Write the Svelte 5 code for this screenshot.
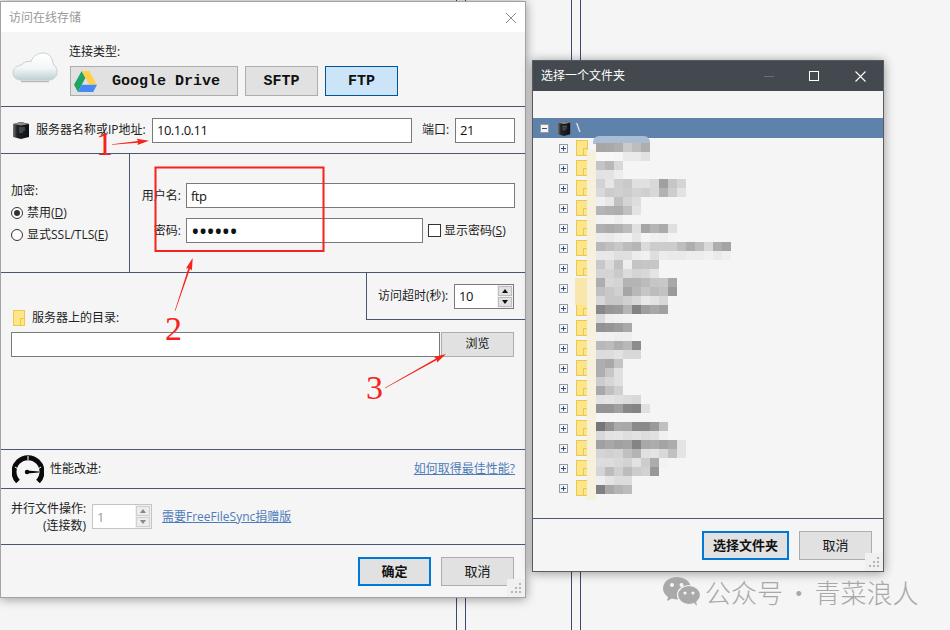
<script>
	const treeRows = Array(18).fill(0)
	// blurred-out folder names, one string per 9px band of the mosaic
	const mosaic = [
		'a6 a8 ae ca bd ae', 'f8 f8 f5 ea ea e1', 'c4 b8 d8', 'e2 e3 ed',
		'd2 e6 cf c9 e0 e0 d8 a0 c6 d5', 'd9 cc d0 cc d4 cf d8 b2 cd e2', 'ef e8 c0 d4 dd', 'b5 b0 ae c0 e3',
		'f2 f3 ee', 'b0 ab b0 bc e0 a6 b5 aa df', 'ec ea ef f2 e6 f4 f0 ee f4',
		'b8 c0 c8 bc b6 da cc cc cc be ae be d8 ae a4', 'e8 e8 df df ec f0 de ec ea e9 ed ec f0 ea ef',
		'c8 dc c2 ee c4 c6 c6', 'd4 d4 ca dc d4 d8 e4', 'ae d8 d4 b4 b4 bc c6 c8 a8', 'c0 c8 d0 a6 b8 c6 bc c2 9a',
		'd8 c8 c8 d0 d8 e8 e2 d8', '88 96 9a b4 82 9e a8 a0', 'da ee f0 f2', '92 96 9c a8', 'f0 f1 ee ee',
		'b8 bc ae b8 8c', 'dc dc e2 d8 d8', 'ae a8 c4', 'ae c6 e0', 'cc d6 e0', 'a8 c0 d0', 'e2 e4 e0 dc d8',
		'94 94 a0 88 84 e0', '', '76 92 aa a8 8a 8a 9a c0', 'd8 e2 e4 de e2 dc e0 f0',
		'a0 a8 a0 a4 84 a8 ac a4 ac e4', 'd4 d0 d4 c0 b4 e0 e4 d8 c0 e4', 'dc dc d8 d2 e2 cc ac f2',
		'd4 bc d0 bc cc d2 98', 'ee e4 dc dc', '80 a8 b4 bc'
	].map((r) => (r ? r.split(' ') : []))

	function arrow(x1, y1, x2, y2) {
		const len = Math.hypot(x2 - x1, y2 - y1)
		const ux = (x2 - x1) / len
		const uy = (y2 - y1) / len
		const nx = -uy
		const ny = ux
		const bx = x2 - ux * 11
		const by = y2 - uy * 11
		const p = (x, y, w) => `${(x + nx * w).toFixed(1)},${(y + ny * w).toFixed(1)}`
		return [p(x1, y1, 0.3), p(bx, by, 0.9), p(bx - ux, by - uy, 3.2), p(x2, y2, 0), p(bx - ux, by - uy, -3.2), p(bx, by, -0.9), p(x1, y1, -0.3)].join(' ')
	}
</script>

{#snippet server()}
	<svg class="server" viewBox="0 0 18 19" preserveAspectRatio="none">
		<defs>
			<linearGradient id="srv" x1="0" x2="1" y1="0" y2="0">
				<stop offset="0" stop-color="#777" />
				<stop offset="0.25" stop-color="#222" />
				<stop offset="1" stop-color="#111" />
			</linearGradient>
		</defs>
		<path d="M1 3 L9 1 L17 3 L17 16 L9 18 L1 16 Z" fill="url(#srv)" />
		<path d="M1 3 L9 1 L17 3 L9 4.5 Z" fill="#8a8a8a" />
		<path d="M7 7 H13 M7 9 H13 M7 11 H11" stroke="#6f8aa8" stroke-width="0.8" />
	</svg>
{/snippet}

{#snippet grip()}
	<svg class="grip" width="18" height="18" viewBox="0 0 18 18">
		<rect width="18" height="18" fill="#f0f0f0" />
		<path d="M12 4h2v2h-2z M8 8h2v2H8z M12 8h2v2h-2z M4 12h2v2H4z M8 12h2v2H8z M12 12h2v2h-2z" fill="#b5b5b5" />
	</svg>
{/snippet}

<div class="screen">
	<i class="vline" style="left:456px"></i>
	<i class="vline" style="left:465px"></i>
	<i class="vline" style="left:571px"></i>
	<i class="vline" style="left:580px"></i>

	<div class="win main">
		<div class="titlebar">
			<span>访问在线存储</span>
			<svg width="12" height="12" viewBox="0 0 12 12"><path d="M1 1 L11 11 M11 1 L1 11" stroke="#8a8a8a" stroke-width="1" /></svg>
		</div>

		<div class="sec type">
			<svg class="cloud" width="46" height="31" viewBox="0 0 46 31">
				<defs>
					<linearGradient id="cl" x1="0" x2="0" y1="0" y2="1">
						<stop offset="0" stop-color="#fff" />
						<stop offset="0.55" stop-color="#f4f7f7" />
						<stop offset="1" stop-color="#bfd0d4" />
					</linearGradient>
				</defs>
				<path d="M9 28 C3 28 1 24 1 21 C1 16 5 14 9 13 C12 10 15 9 19 9.5 C21 4 26 1 31 1 C38 1 41 7 41 12 C44 14 45 17 45 20 C45 25 41 28 37 28 Z" fill="url(#cl)" stroke="#c9cfcf" />
				<path d="M9 29.5 H37" stroke="#b9b9b9" stroke-width="1.5" />
			</svg>
			<div>
				<div class="typelabel">连接类型:</div>
				<div class="typebtns">
					<button class="mono gd">
						<svg width="23" height="21" viewBox="0 0 22 20">
							<path d="M7.3 0 L11 6.5 L3.7 20 L0 13 Z" fill="#1fa463" />
							<path d="M7.3 0 H14.7 L22 13 H14.7 Z" fill="#ffd04b" />
							<path d="M7.3 13 H22 L18.3 20 H3.7 Z" fill="#4688f4" />
						</svg>
						<span>Google Drive</span>
					</button>
					<button class="mono sftp">SFTP</button>
					<button class="mono ftp">FTP</button>
				</div>
			</div>
		</div>

		<div class="sec host">
			{@render server()}
			<label for="host" class="hostlabel">服务器名称或IP地址:</label>
			<input id="host" class="field hostfield" value="10.1.0.11" readonly />
			<label for="port" class="portlabel">端口:</label>
			<input id="port" class="field portfield" value="21" readonly />
		</div>

		<div class="sec cred">
			<div class="enc">
				<div>加密:</div>
				<div class="radio"><i class="dot on"></i>禁用(<u>D</u>)</div>
				<div class="radio"><i class="dot"></i>显式SSL/TLS(<u>E</u>)</div>
			</div>
			<div class="login">
				<div class="loginrow">
					<span class="lab">用户名:</span>
					<input class="field grow" value="ftp" readonly />
				</div>
				<div class="loginrow">
					<span class="lab">密码:</span>
					<input class="field grow pass" type="password" value="123456" readonly />
					<span class="show"><i class="check"></i>显示密码(<u>S</u>)</span>
				</div>
			</div>
		</div>

		<div class="sec dir">
			<div class="dirtop">
				<div class="dirlabel"><i class="folder"></i>服务器上的目录:</div>
				<div class="timeout">
					<span>访问超时(秒):</span>
					<div class="spin">
						<input class="field spinfield" value="10" readonly />
						<div class="spinbtns">
							<b class="up"></b>
							<b class="down"></b>
						</div>
					</div>
				</div>
			</div>
			<div class="pathrow">
				<input class="field grow" readonly />
				<button class="btn browse">浏览</button>
			</div>
		</div>

		<div class="sec perf">
			<svg width="32" height="28" viewBox="0 0 32 28">
				<path d="M6 26.5 A14 14 0 1 1 26 26.5" fill="none" stroke="#0a0a0a" stroke-width="5" />
				<path d="M16 1 V5 M3 12 L6 14 M29 12 L26 14" stroke="#fff" stroke-width="1" />
				<circle cx="15" cy="17" r="2.2" fill="#0a0a0a" />
				<path d="M15 15.6 L27 16.4 L27 17.4 L15 18.4 Z" fill="#0a0a0a" />
			</svg>
			<span class="perflabel">性能改进:</span>
			<a href="#top" class="link right">如何取得最佳性能?</a>
		</div>

		<div class="sec par">
			<div class="parlabel">并行文件操作:<br />(连接数)</div>
			<div class="spin off">
				<input class="field spinfield" value="1" readonly disabled />
				<div class="spinbtns">
					<b class="up"></b>
					<b class="down"></b>
				</div>
			</div>
			<a href="#top" class="link">需要FreeFileSync捐赠版</a>
		</div>

		<div class="footer">
			<button class="btn def">确定</button>
			<button class="btn">取消</button>
		</div>
		{@render grip()}
	</div>

	<div class="win picker">
		<div class="darkbar">
			<span class="darktitle">选择一个文件夹</span>
			<i class="min"></i>
			<i class="max"></i>
			<svg width="11" height="11" viewBox="0 0 11 11"><path d="M0.5 0.5 L10.5 10.5 M10.5 0.5 L0.5 10.5" stroke="#fff" stroke-width="1.1" /></svg>
		</div>
		<div class="tree">
			<div class="node root">
				<i class="exp minus"></i>
				{@render server()}
				<span>\</span>
			</div>
			{#each treeRows as _}
				<div class="node">
					<i class="exp plus"></i>
					<i class="folder"></i>
				</div>
			{/each}

			<div class="smear blue"></div>
			<div class="smear cream"></div>
			<div class="smear yellow"></div>
			<div class="mosaic">
				{#each mosaic as row}
					<div class="band">
						{#each row as c}
							<i style="background:#{c}{c}{c}"></i>
						{/each}
					</div>
				{/each}
			</div>
		</div>
		<div class="footer pickfoot">
			<button class="btn def wide">选择文件夹</button>
			<button class="btn">取消</button>
		</div>
		{@render grip()}
	</div>

	<div class="mark">
		<svg width="37" height="29" viewBox="0 0 37 29">
			<path d="M14 0 C6 0 0 5 0 11.5 C0 15 2 18 5 20 L4 24 L9 21.5 C11 22.2 13 22.5 15 22.5 C23 22.5 28 17 28 11.5 C28 5 22 0 14 0 Z" fill="#a9a9a9" />
			<ellipse cx="26" cy="18" rx="11.5" ry="9.5" fill="#a9a9a9" stroke="#f5f5f5" stroke-width="1.2" />
			<path d="M31 26 L34 29 L33 24 Z" fill="#a9a9a9" />
			<circle cx="9" cy="8" r="2" fill="#f5f5f5" />
			<circle cx="18.5" cy="8" r="2" fill="#f5f5f5" />
			<circle cx="22" cy="16" r="1.6" fill="#f5f5f5" />
			<circle cx="30" cy="16" r="1.6" fill="#f5f5f5" />
		</svg>
		<span>公众号 · 青菜浪人</span>
	</div>

	<svg class="notes" width="950" height="630" viewBox="0 0 950 630">
		<rect x="155.5" y="167.5" width="168" height="83.5" fill="none" stroke="#f5231c" stroke-width="2" />
		<polygon points={arrow(112, 144.5, 149, 140.7)} fill="#f5231c" />
		<polygon points={arrow(175, 311, 192.7, 258)} fill="#f5231c" />
		<polygon points={arrow(385, 388, 446, 354)} fill="#f5231c" />
		<text x="96" y="155">1</text>
		<text x="165" y="340">2</text>
		<text x="366" y="399">3</text>
	</svg>
</div>

<style>
	:global(body) {
		background: #f5f5f5;
	}
	* {
		box-sizing: border-box;
	}
	.screen {
		position: relative;
		width: 950px;
		height: 630px;
		overflow: hidden;
		background: #f5f5f5;
		font-family: "Open Sans", "Noto Sans CJK SC", sans-serif;
		font-size: 12px;
		line-height: 16px;
		color: #222;
	}
	.vline {
		position: absolute;
		top: 0;
		bottom: 0;
		width: 1px;
		background: #3b4a6e;
	}
	.win {
		position: absolute;
		display: flex;
		flex-direction: column;
		background: #f5f5f5;
		box-shadow: 0 1px 10px rgba(0, 0, 0, 0.4);
	}
	.main {
		left: 0;
		top: 1px;
		width: 526px;
		height: 597px;
		border: 1px solid #a3a3a3;
	}
	.picker {
		left: 532px;
		top: 60px;
		width: 352px;
		height: 512px;
		border: 1px solid #565c61;
		border-top: 0;
	}
	.titlebar {
		display: flex;
		align-items: center;
		justify-content: space-between;
		height: 30px;
		flex: none;
		padding: 2px 8px 0 8px;
		background: #fff;
		color: #999;
	}
	.sec {
		flex: none;
		border-bottom: 1px solid #4a5674;
	}
	.type {
		display: flex;
		align-items: flex-end;
		gap: 12px;
		height: 75px;
		padding: 10px 0 10px 11px;
	}
	.cloud {
		margin-bottom: 13px;
	}
	.typelabel {
		margin-bottom: 6px;
		margin-left: -1px;
	}
	.typebtns {
		display: flex;
		gap: 7px;
	}
	button {
		margin: 0;
		padding: 0;
		font: inherit;
		color: #111;
	}
	.mono {
		height: 30px;
		width: 73px;
		padding-top: 2px;
		background: #e1e1e1;
		border: 1px solid #adadad;
		font-family: "Liberation Mono", monospace;
		font-weight: bold;
		font-size: 15px;
	}
	.gd {
		display: flex;
		align-items: center;
		width: 168px;
		padding-left: 3px;
	}
	.gd svg {
		margin-top: -2px;
	}
	.gd span {
		margin-left: 15px;
	}
	.ftp {
		background: #cce4f7;
		border-color: #005499;
	}
	.host {
		display: flex;
		align-items: center;
		height: 47px;
		padding-left: 11px;
	}
	.server {
		flex: none;
		width: 18px;
		height: 19px;
	}
	.hostlabel {
		margin-left: 6px;
		width: 116px;
	}
	.field {
		display: block;
		height: 25px;
		margin: 0;
		padding: 0 4px;
		border: 1px solid #7a7a7a;
		border-radius: 0;
		outline: none;
		background: #fff;
		font-family: inherit;
		font-size: 13px;
		letter-spacing: -0.5px;
		color: #111;
		min-width: 0;
	}
	.hostfield {
		width: 260px;
	}
	.portlabel {
		margin-left: 10px;
		width: 33px;
	}
	.portfield {
		width: 60px;
	}
	.cred {
		display: flex;
		height: 119px;
	}
	.enc {
		flex: none;
		display: flex;
		flex-direction: column;
		justify-content: center;
		width: 129px;
		padding-left: 10px;
		border-right: 1px solid #4a5674;
		line-height: 22px;
	}
	.radio {
		display: flex;
		align-items: center;
		white-space: nowrap;
	}
	.dot {
		position: relative;
		width: 12px;
		height: 12px;
		margin-right: 4px;
		border: 1px solid #333;
		border-radius: 50%;
		background: #fff;
	}
	.dot.on::after {
		content: "";
		position: absolute;
		inset: 2px;
		border-radius: 50%;
		background: #333;
	}
	.login {
		flex: 1;
		min-width: 0;
		display: flex;
		flex-direction: column;
		justify-content: center;
		gap: 10px;
		padding-right: 10px;
	}
	.loginrow {
		display: flex;
		align-items: center;
	}
	.lab {
		flex: none;
		width: 51px;
		margin-right: 5px;
		text-align: right;
	}
	.grow {
		flex: 1;
	}
	.pass {
		font-size: 23px;
		letter-spacing: -1px;
		padding-left: 4px;
	}
	.show {
		flex: none;
		display: flex;
		align-items: center;
		width: 92px;
		padding-left: 5px;
		white-space: nowrap;
	}
	.check {
		width: 13px;
		height: 13px;
		margin-right: 3px;
		border: 1px solid #333;
		background: #fff;
	}
	.dir {
		height: 177px;
	}
	.dirtop {
		display: flex;
		justify-content: space-between;
		height: 53px;
		align-items: flex-start;
	}
	.dirlabel {
		display: flex;
		align-items: center;
		gap: 7px;
		margin: 37px 0 0 12px;
	}
	.timeout {
		display: flex;
		align-items: center;
		justify-content: space-between;
		width: 159px;
		height: 47px;
		padding: 0 11px 0 11px;
		border-left: 1px solid #4a5674;
		border-bottom: 1px solid #4a5674;
	}
	.spin {
		display: flex;
		height: 25px;
		width: 60px;
		border: 1px solid #7a7a7a;
		border-left: 0;
		background: #fff;
	}
	.spinfield {
		flex: 1;
		width: 43px;
		height: 25px;
		margin-top: -1px;
		border-right: 0;
	}
	.spinbtns {
		display: flex;
		flex-direction: column;
		gap: 1px;
		justify-content: center;
		width: 16px;
		padding: 0 1px 0 1px;
		background: #f0f0f0;
	}
	.spinbtns b {
		position: relative;
		height: 10px;
		background: #e1e1e1;
		border: 1px solid #bdbdbd;
	}
	.spinbtns b::after {
		content: "";
		position: absolute;
		left: 3px;
		top: 2px;
		border-left: 3px solid transparent;
		border-right: 3px solid transparent;
	}
	.up::after {
		border-bottom: 4px solid #111;
	}
	.down::after {
		border-top: 4px solid #111;
	}
	.pathrow {
		display: flex;
		margin-top: 6px;
		padding: 0 11px 0 10px;
	}
	.btn {
		flex: none;
		width: 73px;
		height: 29px;
		padding-bottom: 2px;
		background: #e1e1e1;
		border: 1px solid #adadad;
		font-size: 13px;
	}
	.browse {
		height: 25px;
		margin-left: 1px;
		font-size: 12px;
	}
	.perf {
		display: flex;
		align-items: center;
		height: 39px;
		padding: 0 10px 0 11px;
	}
	.perflabel {
		margin-left: 6px;
	}
	.link {
		color: #4e7cb8;
		text-decoration: underline;
	}
	.right {
		margin-left: auto;
	}
	.par {
		display: flex;
		align-items: center;
		height: 56px;
		padding-left: 10px;
	}
	.parlabel {
		width: 75px;
		text-align: right;
		line-height: 17px;
		white-space: nowrap;
	}
	.off {
		margin: 0 10px 0 6px;
		border-color: #c4c4c4;
		border-left: 0;
	}
	.off .spinfield {
		border-color: #c4c4c4;
		color: #9a9a9a;
	}
	.off .spinbtns b {
		background: #ececec;
		border-color: #cfcfcf;
	}
	.off .up::after {
		border-bottom-color: #888;
	}
	.off .down::after {
		border-top-color: #888;
	}
	.footer {
		display: flex;
		justify-content: flex-end;
		gap: 10px;
		padding: 12px 11px 0 0;
	}
	.def {
		border: 2px solid #0078d7;
		font-weight: bold;
	}
	.wide {
		width: 87px;
	}
	.grip {
		position: absolute;
		right: 0;
		bottom: 0;
	}
	.darkbar {
		display: flex;
		align-items: center;
		flex: none;
		height: 31px;
		margin: 0 -1px;
		padding: 0 17px 0 8px;
		background: #43494e;
		color: #fff;
		border: 1px solid #565c61;
		border-bottom: 0;
	}
	.darktitle {
		flex: 1;
	}
	.min {
		width: 10px;
		height: 1px;
		margin-right: 35px;
		background: #6b7074;
	}
	.max {
		width: 10px;
		height: 10px;
		margin-right: 36px;
		border: 1px solid #fff;
	}
	.tree {
		position: relative;
		flex: none;
		height: 428px;
		padding-top: 27px;
		border-bottom: 1px solid #4a5674;
	}
	.node {
		display: flex;
		align-items: center;
		height: 20px;
		padding-left: 26px;
	}
	.root {
		padding-left: 7px;
		background: #5f82ac;
		color: #fff;
	}
	.root .server {
		width: 14px;
		height: 17px;
	}
	.root span {
		margin-left: 5px;
	}
	.exp {
		position: relative;
		flex: none;
		width: 9px;
		height: 9px;
		margin-right: 8px;
		background: #f4f4f4;
		border: 1px solid #999;
	}
	.exp::before,
	.plus::after {
		content: "";
		position: absolute;
		background: #2f4a9a;
	}
	.exp::before {
		left: 1px;
		right: 1px;
		top: 3px;
		height: 1px;
	}
	.plus::after {
		top: 1px;
		bottom: 1px;
		left: 3px;
		width: 1px;
	}
	.folder {
		position: relative;
		flex: none;
		display: block;
		width: 12px;
		height: 16px;
		background: #fde589;
		border: 1px solid #edc84e;
	}
	.folder::after {
		content: "";
		position: absolute;
		right: -1px;
		bottom: -1px;
		width: 3px;
		height: 6px;
		border: 1px solid #edc84e;
	}
	.smear {
		position: absolute;
	}
	.blue {
		left: 60px;
		top: 45px;
		width: 57px;
		height: 8px;
		background: #abbdd3;
		border-radius: 6px 6px 0 0;
	}
	.cream {
		left: 54px;
		top: 59px;
		width: 9px;
		height: 350px;
		background: #f6f0dc;
	}
	.yellow {
		left: 42px;
		top: 187px;
		width: 12px;
		height: 27px;
		background: #f9e6ad;
	}
	.mosaic {
		position: absolute;
		left: 63px;
		top: 52px;
	}
	.band {
		display: flex;
		height: 9px;
	}
	.band i {
		width: 9px;
	}
	.pickfoot {
		padding-top: 12px;
	}
	.mark {
		position: absolute;
		left: 663px;
		top: 577px;
		display: flex;
		align-items: center;
		gap: 5px;
		color: #a8a8a8;
		font-family: "Noto Sans CJK SC", sans-serif;
		font-size: 26px;
		font-weight: 300;
		word-spacing: -3px;
		line-height: 29px;
		white-space: nowrap;
	}
	.notes {
		position: absolute;
		left: 0;
		top: 0;
		pointer-events: none;
	}
	.notes text {
		font-family: "Liberation Serif", serif;
		font-size: 34px;
		fill: #f5231c;
	}
</style>
